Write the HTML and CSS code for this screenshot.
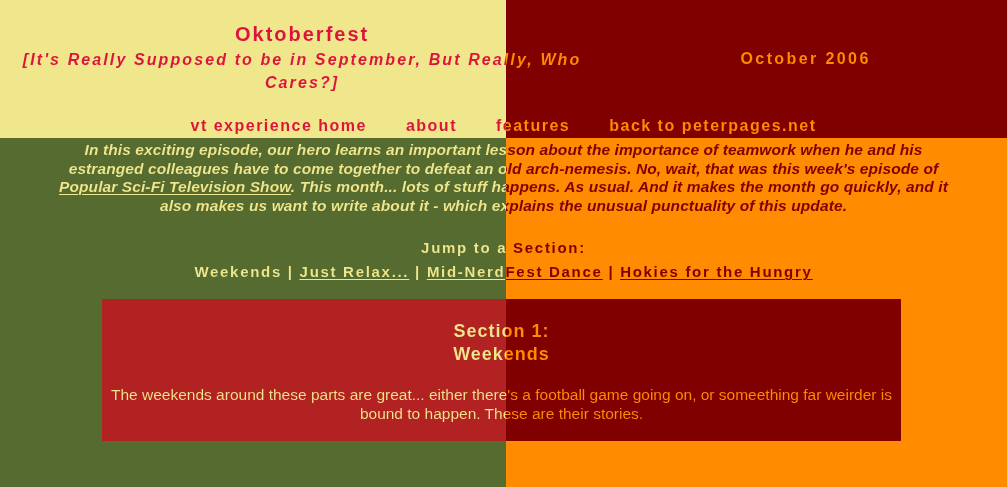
FILE: index.html
```html
<!DOCTYPE html>
<html lang="en">
<head>
<meta charset="utf-8">
<title>Oktoberfest - October 2006</title>
<link rel="stylesheet" href="styles.css">
</head>
<body>
<div class="page">
  <header class="masthead">
    <div class="title-cell">
      <h1 class="title">Oktoberfest</h1>
      <p class="subtitle">[It's Really Supposed to be in September, But Really, Who Cares?]</p>
    </div>
    <div class="date-cell">October 2006</div>
  </header>
  <nav class="nav">
    <a href="#">vt experience home</a>
    <a href="#">about</a>
    <a href="#">features</a>
    <a href="#">back to peterpages.net</a>
  </nav>
  <p class="intro">In this exciting episode, our hero learns an important lesson about the importance of teamwork when he and his estranged colleagues have to come together to defeat an old arch-nemesis. No, wait, that was this week's episode of <a href="#" class="ulink">Popular Sci-Fi Television Show</a>. This month... lots of stuff happens. As usual. And it makes the month go quickly, and it also makes us want to write about it - which explains the unusual punctuality of this update.</p>
  <div class="jump">
    <div class="jump-title">Jump to a Section:</div>
    <div class="jump-links">Weekends | <a href="#" class="ulink">Just Relax...</a> | <a href="#" class="link-split"><span class="ulink">Mid-Nerd</span><span class="ulink ulink-dark">Fest Dance</span></a> | <a href="#" class="ulink ulink-dark">Hokies for the Hungry</a></div>
  </div>
</div>
<section class="section">
  <div class="section-text">
    <h2 class="section-title">Section 1:<br>Weekends</h2>
    <p class="section-body">The weekends around these parts are great... either there's a football game going on, or someething far weirder is bound to happen. These are their stories.</p>
  </div>
</section>
</body>
</html>
```

FILE: styles.css
```css
html, body {
  margin: 0;
  padding: 0;
}

body {
  width: 1007px;
  min-height: 487px;
  font-family: "Liberation Sans", Arial, sans-serif;
  background:
    linear-gradient(90deg, #F0E68C 506px, #800000 506px) 0 0 / 100% 138px no-repeat,
    linear-gradient(90deg, #556B2F 506px, #FF8C00 506px) 0 0 / 100% 100%;
  background-color: #556B2F;
}

/* text coloured per quadrant */
.page {
  color: transparent;
  background:
    linear-gradient(90deg, #DC143C 506px, #FF8C00 506px) 0 0 / 100% 138px no-repeat,
    linear-gradient(90deg, #F0E68C 506px, #800000 506px) 0 0 / 100% 100% no-repeat;
  -webkit-background-clip: text;
  background-clip: text;
  padding-top: 22px;
  overflow: hidden;
}

.page a {
  color: transparent;
  text-decoration: none;
}

.masthead {
  display: flex;
  align-items: center;
}

.title-cell {
  width: 60%;
  text-align: center;
}

.date-cell {
  flex: 1;
  text-align: center;
  font-size: 16px;
  line-height: 23px;
  font-weight: bold;
  letter-spacing: 2.4px;
}

.title {
  margin: 0;
  font-size: 20px;
  line-height: 24px;
  letter-spacing: 2px;
  font-weight: bold;
}

.subtitle {
  margin: 2px 0 0;
  font-size: 16px;
  line-height: 23px;
  font-weight: bold;
  font-style: italic;
  letter-spacing: 2.1px;
}

.nav {
  display: flex;
  justify-content: center;
  gap: 39px;
  margin-top: 22px;
  font-size: 16px;
  line-height: 20px;
  font-weight: bold;
  letter-spacing: 1.5px;
}

.intro {
  margin: 5px 0 0;
  padding: 0 50px;
  text-align: center;
  font-size: 15.5px;
  line-height: 18.5px;
  font-weight: bold;
  font-style: italic;
  letter-spacing: 0.1px;
}

/* underlines take the text colour of the quadrant they sit in */
.page .ulink {
  text-decoration: underline;
  text-decoration-color: #F0E68C;
  text-decoration-thickness: 1px;
  text-underline-offset: 2px;
}

.page .ulink-dark {
  text-decoration-color: #800000;
}

.jump {
  margin-top: 21px;
  text-align: center;
  font-size: 15px;
  line-height: 24px;
  font-weight: bold;
  letter-spacing: 1.7px;
  padding-bottom: 1px;
}

.section {
  margin: 14px 106px 0 102px;
  background: linear-gradient(90deg, #B22222 404px, #800000 404px);
}

.section-text {
  padding: 21px 5px 18px;
  text-align: center;
  color: transparent;
  background: linear-gradient(90deg, #F0E68C 404px, #FF8C00 404px);
  -webkit-background-clip: text;
  background-clip: text;
}

.section-title {
  margin: 0;
  font-size: 18px;
  line-height: 22.5px;
  font-weight: bold;
  letter-spacing: 1px;
}

.section-body {
  margin: 21px 0 0;
  font-size: 15.5px;
  line-height: 18.7px;
}
```
